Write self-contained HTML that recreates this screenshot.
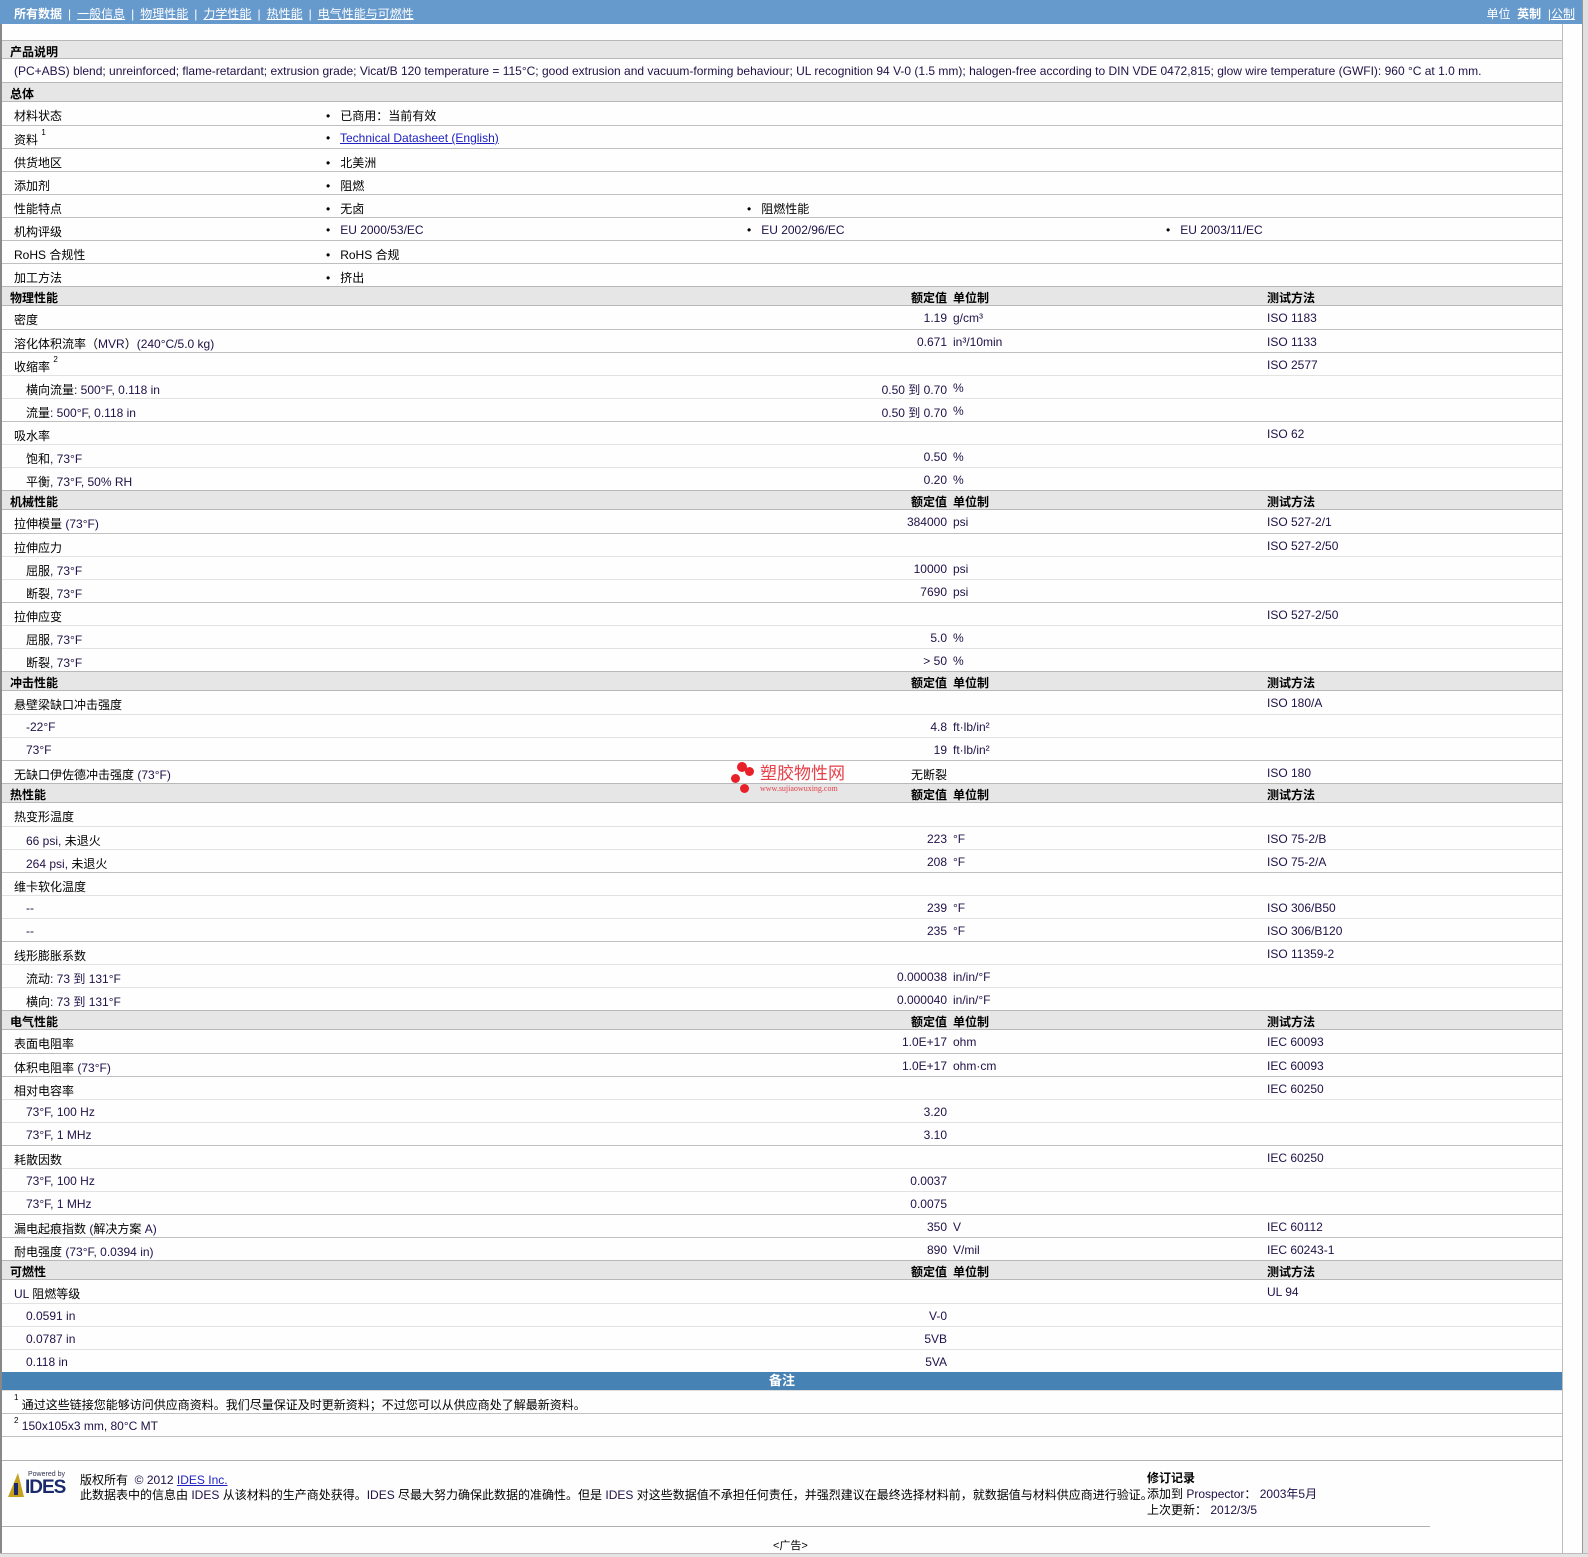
<!DOCTYPE html>
<html style="overflow:hidden"><head><meta charset="utf-8">
<style>
*{margin:0;padding:0;box-sizing:border-box}
html,body{overflow:hidden}
body{width:1588px;height:1557px;background:#fdfefd;font-family:"Liberation Sans","Noto Sans CJK SC",sans-serif;font-size:12px;color:#000;position:relative}
#bar{position:absolute;left:0;top:0;width:1582px;height:24px;background:#6699cc;color:#fff;font-size:12px}
#bar .bl{position:absolute;left:14px;top:5px;white-space:nowrap}
#bar .br{position:absolute;right:7px;top:5px;white-space:nowrap}
#bar a{color:#fff;text-decoration:underline}
#bar .sep{margin:0 6px}
#lb{position:absolute;left:0;top:24px;width:2px;height:1529px;background:#888}
#rb{position:absolute;left:1562px;top:24px;width:20px;height:1529px;background:#fdfefd;border-left:1px solid #bbb}
#sb{position:absolute;left:1582px;top:0;width:6px;height:1557px;background:#e0e0e0;border-left:1px solid #999}
#bot{position:absolute;left:0;top:1553px;width:1588px;height:4px;background:#e4e4e4;border-top:1px solid #bbb}
#main{position:absolute;left:2px;top:40px;width:1560px}
.h,.r{position:relative;width:1560px}
.h{height:20px;background:#e6e6e6;border-top:1px solid #b8b8b8;border-bottom:1px solid #b8b8b8;font-weight:bold}
.r{height:23px;border-top:1px solid #e2e2e2}
.r.g{border-top:1px solid #c0c0c0}
.h + .r{border-top:none}
.h span,.r span{position:absolute;top:5px;white-space:nowrap}
.h span{top:2px}
.l{left:8px}
.r .l{left:12px}
.r .s{left:24px}
.v{right:615px;color:#201048}
.u{left:951px;color:#201048}
.t{left:1265px;color:#201048}
.b1{left:324px}.b2{left:745px}.b3{left:1164px}
.d{color:#201048}
sup{font-size:8px;vertical-align:top;position:relative;top:-3px}
a{color:#2020c0}
#note{height:18px;background:#4682b4;color:#fff;font-weight:bold;text-align:center;font-size:13px;line-height:17px}
</style></head><body>
<div id="bar"><div class="bl"><b>所有数据</b><span class="sep">|</span><a>一般信息</a><span class="sep">|</span><a>物理性能</a><span class="sep">|</span><a>力学性能</a><span class="sep">|</span><a>热性能</a><span class="sep">|</span><a>电气性能与可燃性</a></div>
<div class="br">单位&nbsp; <b>英制</b> &nbsp;|<a>公制</a></div></div>
<div id="lb"></div><div id="rb"></div><div id="sb"></div>

<div id="main">
<div class="h" style="height:19px"><span class="l">产品说明</span></div>
<div class="r"><span class="l d">(PC+ABS) blend; unreinforced; flame-retardant; extrusion grade; Vicat/B 120 temperature = 115°C; good extrusion and vacuum-forming behaviour; UL recognition 94 V-0 (1.5 mm); halogen-free according to DIN VDE 0472,815; glow wire temperature (GWFI): 960 °C at 1.0 mm.</span></div>
<div class="h"><span class="l">总体</span></div>
<div class="r g"><span class="l">材料状态</span><span class="b1">•&nbsp;&nbsp; 已商用：当前有效</span></div>
<div class="r g"><span class="l">资料 <sup>1</sup></span><span class="b1">•&nbsp;&nbsp; <a style="text-decoration:underline">Technical Datasheet (English)</a></span></div>
<div class="r g"><span class="l">供货地区</span><span class="b1">•&nbsp;&nbsp; 北美洲</span></div>
<div class="r g"><span class="l">添加剂</span><span class="b1">•&nbsp;&nbsp; 阻燃</span></div>
<div class="r g"><span class="l">性能特点</span><span class="b1">•&nbsp;&nbsp; 无卤</span><span class="b2">•&nbsp;&nbsp; 阻燃性能</span></div>
<div class="r g"><span class="l">机构评级</span><span class="b1">•&nbsp;&nbsp; <span class="d" style="position:static">EU 2000/53/EC</span></span><span class="b2">•&nbsp;&nbsp; <span class="d" style="position:static">EU 2002/96/EC</span></span><span class="b3">•&nbsp;&nbsp; <span class="d" style="position:static">EU 2003/11/EC</span></span></div>
<div class="r g"><span class="l">RoHS 合规性</span><span class="b1">•&nbsp;&nbsp; RoHS 合规</span></div>
<div class="r g"><span class="l">加工方法</span><span class="b1">•&nbsp;&nbsp; 挤出</span></div>

<div class="h"><span class="l">物理性能</span><span class="v" style="color:#000">额定值</span><span class="u" style="color:#000">单位制</span><span class="t" style="color:#000">测试方法</span></div>
<div class="r g"><span class="l">密度</span><span class="v">1.19</span><span class="u">g/cm³</span><span class="t">ISO 1183</span></div>
<div class="r g"><span class="l">溶化体积流率（<span class="d" style="position:static">MVR</span>）<span class="d" style="position:static">(240°C/5.0 kg)</span></span><span class="v">0.671</span><span class="u">in³/10min</span><span class="t">ISO 1133</span></div>
<div class="r g"><span class="l">收缩率 <sup>2</sup></span><span class="t">ISO 2577</span></div>
<div class="r"><span class="s">横向流量<span class="d" style="position:static">: 500°F, 0.118 in</span></span><span class="v">0.50 到 0.70</span><span class="u">%</span></div>
<div class="r"><span class="s">流量<span class="d" style="position:static">: 500°F, 0.118 in</span></span><span class="v">0.50 到 0.70</span><span class="u">%</span></div>
<div class="r g"><span class="l">吸水率</span><span class="t">ISO 62</span></div>
<div class="r"><span class="s">饱和<span class="d" style="position:static">, 73°F</span></span><span class="v">0.50</span><span class="u">%</span></div>
<div class="r"><span class="s">平衡<span class="d" style="position:static">, 73°F, 50% RH</span></span><span class="v">0.20</span><span class="u">%</span></div>

<div class="h"><span class="l">机械性能</span><span class="v" style="color:#000">额定值</span><span class="u" style="color:#000">单位制</span><span class="t" style="color:#000">测试方法</span></div>
<div class="r g"><span class="l">拉伸模量 <span class="d" style="position:static">(73°F)</span></span><span class="v">384000</span><span class="u">psi</span><span class="t">ISO 527-2/1</span></div>
<div class="r g"><span class="l">拉伸应力</span><span class="t">ISO 527-2/50</span></div>
<div class="r"><span class="s">屈服<span class="d" style="position:static">, 73°F</span></span><span class="v">10000</span><span class="u">psi</span></div>
<div class="r"><span class="s">断裂<span class="d" style="position:static">, 73°F</span></span><span class="v">7690</span><span class="u">psi</span></div>
<div class="r g"><span class="l">拉伸应变</span><span class="t">ISO 527-2/50</span></div>
<div class="r"><span class="s">屈服<span class="d" style="position:static">, 73°F</span></span><span class="v">5.0</span><span class="u">%</span></div>
<div class="r"><span class="s">断裂<span class="d" style="position:static">, 73°F</span></span><span class="v">&gt; 50</span><span class="u">%</span></div>

<div class="h"><span class="l">冲击性能</span><span class="v" style="color:#000">额定值</span><span class="u" style="color:#000">单位制</span><span class="t" style="color:#000">测试方法</span></div>
<div class="r g"><span class="l">悬壁梁缺口冲击强度</span><span class="t">ISO 180/A</span></div>
<div class="r"><span class="s d">-22°F</span><span class="v">4.8</span><span class="u">ft·lb/in²</span></div>
<div class="r"><span class="s d">73°F</span><span class="v">19</span><span class="u">ft·lb/in²</span></div>
<div class="r g"><span class="l">无缺口伊佐德冲击强度 <span class="d" style="position:static">(73°F)</span></span><span class="v" style="color:#000">无断裂</span><span class="t">ISO 180</span></div>

<div class="h"><span class="l">热性能</span><span class="v" style="color:#000">额定值</span><span class="u" style="color:#000">单位制</span><span class="t" style="color:#000">测试方法</span></div>
<div class="r g"><span class="l">热变形温度</span></div>
<div class="r"><span class="s"><span class="d" style="position:static">66 psi, </span>未退火</span><span class="v">223</span><span class="u">°F</span><span class="t">ISO 75-2/B</span></div>
<div class="r"><span class="s"><span class="d" style="position:static">264 psi, </span>未退火</span><span class="v">208</span><span class="u">°F</span><span class="t">ISO 75-2/A</span></div>
<div class="r g"><span class="l">维卡软化温度</span></div>
<div class="r"><span class="s d">--</span><span class="v">239</span><span class="u">°F</span><span class="t">ISO 306/B50</span></div>
<div class="r"><span class="s d">--</span><span class="v">235</span><span class="u">°F</span><span class="t">ISO 306/B120</span></div>
<div class="r g"><span class="l">线形膨胀系数</span><span class="t">ISO 11359-2</span></div>
<div class="r"><span class="s">流动<span class="d" style="position:static">: 73 到 131°F</span></span><span class="v">0.000038</span><span class="u">in/in/°F</span></div>
<div class="r"><span class="s">横向<span class="d" style="position:static">: 73 到 131°F</span></span><span class="v">0.000040</span><span class="u">in/in/°F</span></div>

<div class="h"><span class="l">电气性能</span><span class="v" style="color:#000">额定值</span><span class="u" style="color:#000">单位制</span><span class="t" style="color:#000">测试方法</span></div>
<div class="r g"><span class="l">表面电阻率</span><span class="v">1.0E+17</span><span class="u">ohm</span><span class="t">IEC 60093</span></div>
<div class="r g"><span class="l">体积电阻率 <span class="d" style="position:static">(73°F)</span></span><span class="v">1.0E+17</span><span class="u">ohm·cm</span><span class="t">IEC 60093</span></div>
<div class="r g"><span class="l">相对电容率</span><span class="t">IEC 60250</span></div>
<div class="r"><span class="s d">73°F, 100 Hz</span><span class="v">3.20</span></div>
<div class="r"><span class="s d">73°F, 1 MHz</span><span class="v">3.10</span></div>
<div class="r g"><span class="l">耗散因数</span><span class="t">IEC 60250</span></div>
<div class="r"><span class="s d">73°F, 100 Hz</span><span class="v">0.0037</span></div>
<div class="r"><span class="s d">73°F, 1 MHz</span><span class="v">0.0075</span></div>
<div class="r g"><span class="l">漏电起痕指数 <span class="d" style="position:static">(</span>解决方案 <span class="d" style="position:static">A)</span></span><span class="v">350</span><span class="u">V</span><span class="t">IEC 60112</span></div>
<div class="r g"><span class="l">耐电强度 <span class="d" style="position:static">(73°F, 0.0394 in)</span></span><span class="v">890</span><span class="u">V/mil</span><span class="t">IEC 60243-1</span></div>

<div class="h"><span class="l">可燃性</span><span class="v" style="color:#000">额定值</span><span class="u" style="color:#000">单位制</span><span class="t" style="color:#000">测试方法</span></div>
<div class="r g"><span class="l"><span class="d" style="position:static">UL</span> 阻燃等级</span><span class="t">UL 94</span></div>
<div class="r"><span class="s d">0.0591 in</span><span class="v">V-0</span></div>
<div class="r"><span class="s d">0.0787 in</span><span class="v">5VB</span></div>
<div class="r"><span class="s d">0.118 in</span><span class="v">5VA</span></div>
<div id="note">备注</div>
<div class="r" style="border-top:1px solid #ddd"><span class="l"><sup>1</sup> 通过这些链接您能够访问供应商资料。我们尽量保证及时更新资料；不过您可以从供应商处了解最新资料。</span></div>
<div class="r g"><span class="l"><sup>2</sup> <span class="d" style="position:static">150x105x3 mm, 80°C MT</span></span></div>
<div class="r g"></div>
</div>

<div style="position:absolute;left:2px;top:1460px;width:1560px;border-top:1px solid #b0b0b0"></div>
<div style="position:absolute;left:8px;top:1471px;width:62px;height:28px">
<div style="position:absolute;left:20px;top:0;font-size:7px;color:#335">Powered by</div>
<svg style="position:absolute;left:0;top:2px" width="16" height="24"><polygon points="10,0 16,24 0,24" fill="#c8a020"/><rect x="6" y="10" width="4" height="12" fill="#1a2a6c"/></svg>
<div style="position:absolute;left:17px;top:6px;font-size:19px;font-weight:bold;color:#1a2a6c;letter-spacing:-1px">IDES</div>
</div>
<div style="position:absolute;left:80px;top:1471px">版权所有 &nbsp;<span class="d">© 2012 </span><a style="text-decoration:underline">IDES Inc.</a></div>
<div style="position:absolute;left:80px;top:1486px;white-space:nowrap">此数据表中的信息由 <span class="d">IDES</span> 从该材料的生产商处获得。<span class="d">IDES</span> 尽最大努力确保此数据的准确性。但是 <span class="d">IDES</span> 对这些数据值不承担任何责任，并强烈建议在最终选择材料前，就数据值与材料供应商进行验证。</div>
<div style="position:absolute;left:1147px;top:1470px;line-height:16px;white-space:nowrap"><b>修订记录</b><br>添加到 <span class="d">Prospector</span>： <span class="d">2003年5月</span><br>上次更新： <span class="d">2012/3/5</span></div>
<div style="position:absolute;left:2px;top:1526px;width:1428px;border-top:1px solid #b0b0b0"></div>
<div style="position:absolute;left:773px;top:1537px;font-size:11px">&lt;广告&gt;</div>
<div id="bot"></div>

<div style="position:absolute;left:731px;top:762px;width:130px;height:34px">
<div style="position:absolute;left:6px;top:0;width:10px;height:10px;border-radius:50%;background:#e8202a"></div>
<div style="position:absolute;left:14px;top:5px;width:9px;height:9px;border-radius:50%;background:#e8202a"></div>
<div style="position:absolute;left:0;top:12px;width:9px;height:9px;border-radius:50%;background:#e8202a"></div>
<div style="position:absolute;left:9px;top:22px;width:9px;height:9px;border-radius:50%;background:#e8202a"></div>
<div style="position:absolute;left:29px;top:2px;color:#e8404a;font-size:17px;line-height:20px">塑胶物性网</div>
<div style="position:absolute;left:29px;top:22px;color:#e8404a;font-size:8px;font-family:'Liberation Serif',serif">www.sujiaowuxing.com</div>
</div>
</body></html>
